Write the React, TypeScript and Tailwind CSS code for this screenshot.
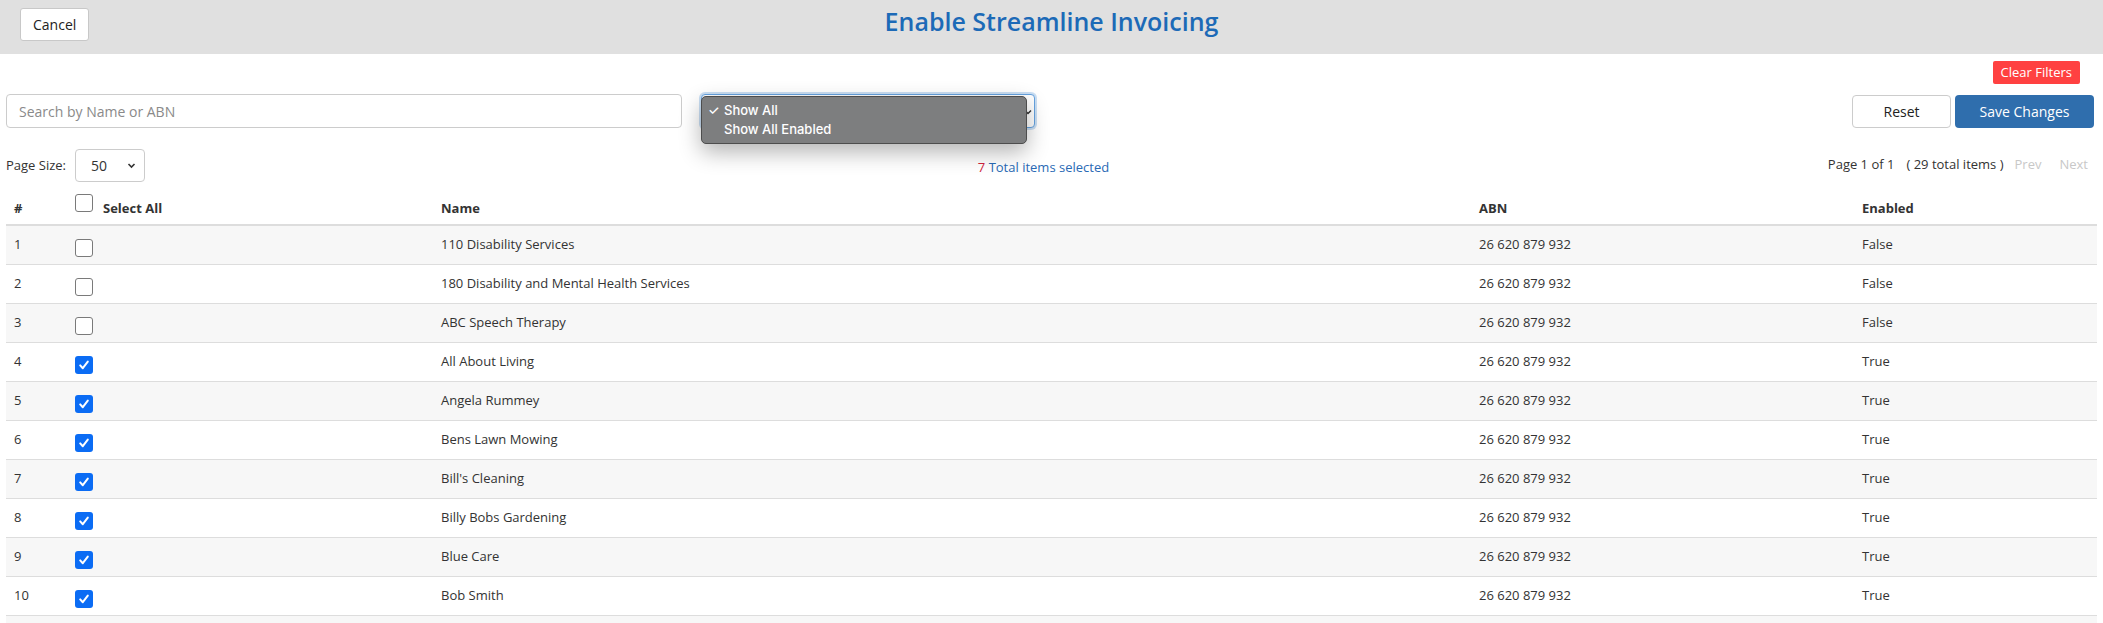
import React from 'react'

const rows = [
  { name: '110 Disability Services', abn: '26 620 879 932', enabled: false },
  { name: '180 Disability and Mental Health Services', abn: '26 620 879 932', enabled: false },
  { name: 'ABC Speech Therapy', abn: '26 620 879 932', enabled: false },
  { name: 'All About Living', abn: '26 620 879 932', enabled: true },
  { name: 'Angela Rummey', abn: '26 620 879 932', enabled: true },
  { name: 'Bens Lawn Mowing', abn: '26 620 879 932', enabled: true },
  { name: "Bill's Cleaning", abn: '26 620 879 932', enabled: true },
  { name: 'Billy Bobs Gardening', abn: '26 620 879 932', enabled: true },
  { name: 'Blue Care', abn: '26 620 879 932', enabled: true },
  { name: 'Bob Smith', abn: '26 620 879 932', enabled: true },
]

function Checkbox({ checked }: { checked: boolean }) {
  if (checked) {
    return (
      <span className="w-[18px] h-[18px] rounded-[3px] bg-[#0b6cf4] flex items-center justify-center shrink-0">
        <svg width="12" height="12" viewBox="0 0 12 12">
          <path d="M2.2 6.4 L4.8 9.2 L9.8 2.6" fill="none" stroke="white" strokeWidth="2" strokeLinecap="round" strokeLinejoin="round" />
        </svg>
      </span>
    )
  }
  return <span className="w-[18px] h-[18px] rounded-[3px] bg-white border border-[#7a7a7a] shrink-0 block" />
}

export default function App() {
  return (
    <div className="min-h-screen bg-white text-[#333] font-['Open_Sans',sans-serif]">
      {/* top bar */}
      <header className="h-[54px] bg-[#e0e0e0] grid grid-cols-[1fr_auto_1fr] items-start px-[20px]">
        <div className="pt-[8px]">
          <button className="h-[33px] px-[12px] bg-white border border-[#c8c8c8] rounded-[3px] text-[14px] text-[#222]">
            Cancel
          </button>
        </div>
        <h1 className="pt-[4px] text-[25px] leading-[34px] font-semibold text-[#1c6ab7]">Enable Streamline Invoicing</h1>
        <div />
      </header>

      <div className="px-[6px]">
        <div className="flex justify-end mt-[7px] pr-[17px]">
          <button className="h-[23px] px-[8px] bg-[#ff4141] text-white text-[13px] rounded-[2px]">Clear Filters</button>
        </div>

        {/* filters + actions */}
        <div className="flex items-center mt-[10px] h-[34px]">
          <input
            className="w-[676px] h-[34px] border border-[#cccccc] rounded-[4px] px-[12px] text-[14px] placeholder:text-[#8a8a8a] outline-none"
            placeholder="Search by Name or ABN"
          />
          <div className="relative ml-[19px] w-[334px] h-[34px] rounded-[4px] border border-[#66a3e0] shadow-[0_0_0_2px_rgba(102,163,224,0.35)] bg-white">
            <svg className="absolute right-[2px] top-[13px]" width="8" height="8" viewBox="0 0 8 8">
              <path d="M1 2.5 L4 5.5 L7 2.5" fill="none" stroke="#333" strokeWidth="1.5" />
            </svg>
            <div className="absolute left-[-1px] top-[1px] w-[326px] h-[48px] bg-[#7d7e7f] border border-[#4d4d4d] rounded-[5px] shadow-[0_8px_22px_rgba(0,0,0,0.3)] pt-[4px] pl-[6px] font-['Inter',sans-serif] text-[13px] font-medium text-white">
              <div className="flex items-center leading-[19px]">
                <span className="w-[16px]">✓</span>
                <span>Show All</span>
              </div>
              <div className="flex items-center leading-[19px]">
                <span className="w-[16px]" />
                <span>Show All Enabled</span>
              </div>
            </div>
          </div>
          <div className="flex-1" />
          <button className="w-[99px] h-[33px] border border-[#cccccc] rounded-[4px] bg-white text-[14px] text-[#222]">Reset</button>
          <button className="ml-[4px] mr-[3px] w-[139px] h-[33px] rounded-[4px] bg-[#2f6ead] text-white text-[14px]">Save Changes</button>
        </div>

        {/* page size / count / pagination */}
        <div className="grid grid-cols-[1fr_auto_1fr] items-center mt-[21px] h-[33px] text-[13px]">
          <div className="flex items-center">
            <span>Page Size:</span>
            <div className="ml-[9px] w-[70px] h-[33px] border border-[#cccccc] rounded-[4px] flex items-center justify-between pl-[15px] pr-[8px] text-[14px]">
              <span>50</span>
              <svg width="9" height="9" viewBox="0 0 9 9">
                <path d="M1.5 3 L4.5 6 L7.5 3" fill="none" stroke="#333" strokeWidth="1.6" />
              </svg>
            </div>
          </div>
          <div className="text-[#2a6ab5] pt-[4px] pr-[16px]">
            <span className="text-[#d0233c]">7</span> Total items selected
          </div>
          <div className="flex justify-end items-center pr-[9px] -mt-[2px]">
            <span>Page 1 of 1</span>
            <span className="ml-[12px]">( 29 total items )</span>
            <span className="ml-[11px] text-[#c8c8c8]">Prev</span>
            <span className="ml-[18px] text-[#c8c8c8]">Next</span>
          </div>
        </div>

        {/* table */}
        <div className="mt-[4px] text-[13px]">
          <div className="grid grid-cols-[61px_366px_1038px_383px_1fr] h-[40px] border-b-2 border-[#dddddd] items-end pb-[6px] font-bold">
            <div className="pl-[8px] leading-[20px]">#</div>
            <div className="pl-[8px] flex items-end">
              <span className="mb-[6px]">
                <Checkbox checked={false} />
              </span>
              <span className="ml-[10px] leading-[20px]">Select All</span>
            </div>
            <div className="pl-[8px] leading-[20px]">Name</div>
            <div className="pl-[8px] leading-[20px]">ABN</div>
            <div className="pl-[8px] leading-[20px]">Enabled</div>
          </div>
          {rows.map((r, i) => (
            <div
              key={i}
              className={`grid grid-cols-[61px_366px_1038px_383px_1fr] h-[39px] border-b border-[#dddddd] pt-[8px] ${
                i % 2 === 0 ? 'bg-[#f7f7f7]' : 'bg-white'
              }`}
            >
              <div className="pl-[8px] leading-[20px]">{i + 1}</div>
              <div className="pl-[8px] pt-[5px]">
                <Checkbox checked={r.enabled} />
              </div>
              <div className="pl-[8px] leading-[20px]">{r.name}</div>
              <div className="pl-[8px] leading-[20px]">{r.abn}</div>
              <div className="pl-[8px] leading-[20px]">{r.enabled ? 'True' : 'False'}</div>
            </div>
          ))}
          {/* next striped row, only its top edge shows in the frame */}
          <div className="h-[39px] bg-[#f7f7f7]" />
        </div>
      </div>
    </div>
  )
}
